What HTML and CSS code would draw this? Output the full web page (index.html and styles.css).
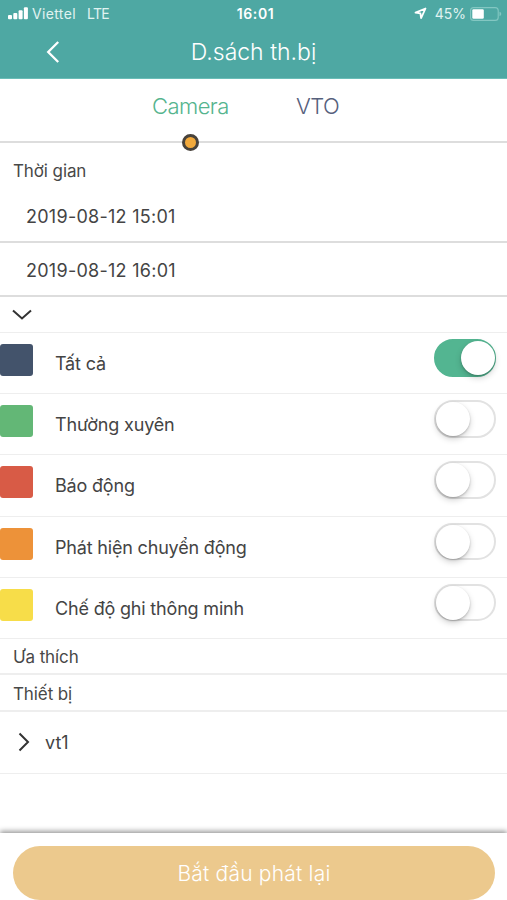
FILE: index.html
```html
<!DOCTYPE html>
<html lang="vi">
<head>
<meta charset="utf-8">
<title>D.sách th.bị</title>
<link rel="stylesheet" href="styles.css">
</head>
<body>
<div class="app">
  <header class="header">
    <div class="status">
      <div class="status-side">
        <svg class="signal" width="20" height="13" viewBox="0 0 20 13" fill="#fff"><rect x="0" y="8" width="4" height="4.3" rx="1"/><rect x="5.3" y="6" width="4" height="6.3" rx="1"/><rect x="10.6" y="3.2" width="4" height="9.1" rx="1"/><rect x="15.9" y="0.3" width="4" height="12" rx="1"/></svg>
        <span class="carrier">Viettel</span><span class="network">LTE</span>
      </div>
      <span class="clock">16:01</span>
      <div class="status-side status-right">
        <svg class="location" width="13" height="13" viewBox="0 0 13 13" fill="none" stroke="#fff" stroke-width="1.8" stroke-linejoin="round"><path d="M11.5 1.5 1.5 5.7 6.4 6.3 7.1 11.2Z"/></svg>
        <span class="percent">45%</span>
        <svg class="battery" width="32" height="14" viewBox="0 0 32 14"><rect x=".6" y=".6" width="27.6" height="12.8" rx="3" fill="none" stroke="#83c7c2" stroke-width="1.1"/><rect x="2.3" y="2.3" width="11.5" height="9.4" rx="1.2" fill="#fff"/><path d="M29.5 4.8Q31.3 5.4 31.3 7T29.5 9.2Z" fill="#83c7c2"/></svg>
      </div>
    </div>
    <div class="titlebar">
      <svg class="back" width="14" height="22" viewBox="0 0 14 22" fill="none" stroke="#fff" stroke-width="2.3"><path d="M12.2 1 2.2 11 12.2 21"/></svg>
      <h1 class="title">D.sách th.bị</h1>
    </div>
  </header>
  <nav class="tabs"><span class="tab tab-active">Camera<i class="dot"></i></span><span class="tab tab-vto">VTO</span></nav>
  <h2 class="label label-time">Thời gian</h2>
  <div class="date">2019-08-12 15:01</div>
  <div class="date">2019-08-12 16:01</div>
  <div class="expand"><svg width="20" height="12" viewBox="0 0 20 12" fill="none" stroke="#333" stroke-width="2"><path d="M1 1.5 10 9.5 19 1.5"/></svg></div>
  <ul class="types">
    <li class="type"><i class="swatch navy"></i><span class="name">Tất cả</span><i class="switch on"></i></li>
    <li class="type"><i class="swatch green"></i><span class="name">Thường xuyên</span><i class="switch"></i></li>
    <li class="type"><i class="swatch red"></i><span class="name">Báo động</span><i class="switch"></i></li>
    <li class="type"><i class="swatch orange"></i><span class="name">Phát hiện chuyển động</span><i class="switch"></i></li>
    <li class="type"><i class="swatch yellow"></i><span class="name">Chế độ ghi thông minh</span><i class="switch"></i></li>
  </ul>
  <h2 class="label label-fav">Ưa thích</h2>
  <h2 class="label label-dev">Thiết bị</h2>
  <div class="device"><svg width="12" height="20" viewBox="0 0 12 20" fill="none" stroke="#333" stroke-width="2"><path d="M1.5 1.5 10 10 1.5 18.5"/></svg><span>vt1</span></div>
  <footer class="footer"><button class="play">Bắt đầu phát lại</button></footer>
</div>
</body>
</html>
```
FILE: styles.css
```css
* { box-sizing: border-box; }
body { margin: 0; background: #fff; color: #444; font-family: Inter, "Liberation Sans", sans-serif; }
.app { width: 507px; height: 900px; overflow: hidden; display: flex; flex-direction: column; }
.app > * { flex-shrink: 0; }
h1, h2, ul { margin: 0; padding: 0; font-weight: 400; }
.header { height: 79px; background: #4ea8a3; color: #fff; border-bottom: 1px solid #6abdb7; }
.status { height: 27px; padding: 0 5px 0 8px; display: grid; grid-template-columns: 1fr auto 1fr; align-items: center; font-size: 14px; }
.status-side { display: flex; align-items: center; color: #e0f3f1; }
.status-right { justify-content: flex-end; }
.signal { margin-right: 4px; }
.carrier { letter-spacing: .35px; }
.network { margin-left: 11px; letter-spacing: -.6px; }
.clock { padding-left: 1px; font-weight: 600; font-size: 14px; letter-spacing: .6px; }
.location { margin-right: 8px; }
.percent { margin-right: 4px; }
.titlebar { height: 50px; display: flex; align-items: center; justify-content: center; position: relative; }
.back { position: absolute; left: 46px; top: 14px; }
.title { font-size: 23px; line-height: 50px; font-weight: 300; }
.tabs { height: 64px; border-bottom: 2px solid #ddd; display: flex; line-height: 55px; font-size: 22px; font-weight: 300; color: #56607c; }
.tab { letter-spacing: -.55px; }
.tab-active { margin-left: 152px; width: 77px; color: #55b48e; position: relative; }
.tab-vto { margin-left: 67px; }
.dot { position: absolute; left: 30px; top: 55px; width: 17px; height: 17px; border-radius: 50%; background: #f2a93b; border: 3px solid #48423b; }
.label { padding-left: 13px; font-size: 17px; letter-spacing: -.1px; color: #484848; }
.label-time { height: 46px; line-height: 56px; }
.date { height: 54px; padding-left: 26px; line-height: 55px; font-size: 18px; letter-spacing: .27px; border-bottom: 2px solid #ddd; }
.expand { height: 36px; padding: 12px 0 0 12px; border-bottom: 1px solid #eee; }
.expand svg, .device svg { display: block; }
.types { list-style: none; }
.type { height: 61.2px; padding-right: 11px; border-bottom: 1px solid #eee; display: flex; align-items: flex-start; }
.swatch { width: 33px; height: 32px; margin-top: 11px; border-radius: 3px; }
.navy { background: #43536b; }
.green { background: #63b776; }
.red { background: #d85b46; }
.orange { background: #ed9239; }
.yellow { background: #f7dd49; }
.name { flex: 1; padding-left: 22px; line-height: 61px; font-size: 18px; letter-spacing: -.18px; }
.switch { width: 62px; height: 37.5px; margin-top: 6px; border: 2px solid #e2e2e2; border-radius: 19px; }
.switch::before { content: ""; display: block; width: 34px; height: 34px; border-radius: 50%; background: #fff; box-shadow: 0 3px 6px rgba(0,0,0,.18), 0 1px 2px rgba(0,0,0,.2); }
.on { background: #53b591; border-color: #53b591; }
.on::before { margin-left: 25px; }
.label-fav { height: 36px; line-height: 37px; border-bottom: 2px solid #eee; }
.label-dev { height: 37px; line-height: 39px; border-bottom: 2px solid #eee; }
.device { height: 62px; padding-left: 18px; display: flex; align-items: center; gap: 15px; font-size: 18px; border-bottom: 1px solid #eee; }
.footer { height: 67px; margin-top: auto; padding: 13px 12px 0 13px; background: #fff; box-shadow: 0 -2px 5px rgba(0,0,0,.4); }
.play { display: block; width: 482px; height: 54px; border: 0; padding: 0; border-radius: 27px; background: #ecc98d; color: #fff; font-family: inherit; font-size: 21px; font-weight: 300; letter-spacing: .2px; }
```
